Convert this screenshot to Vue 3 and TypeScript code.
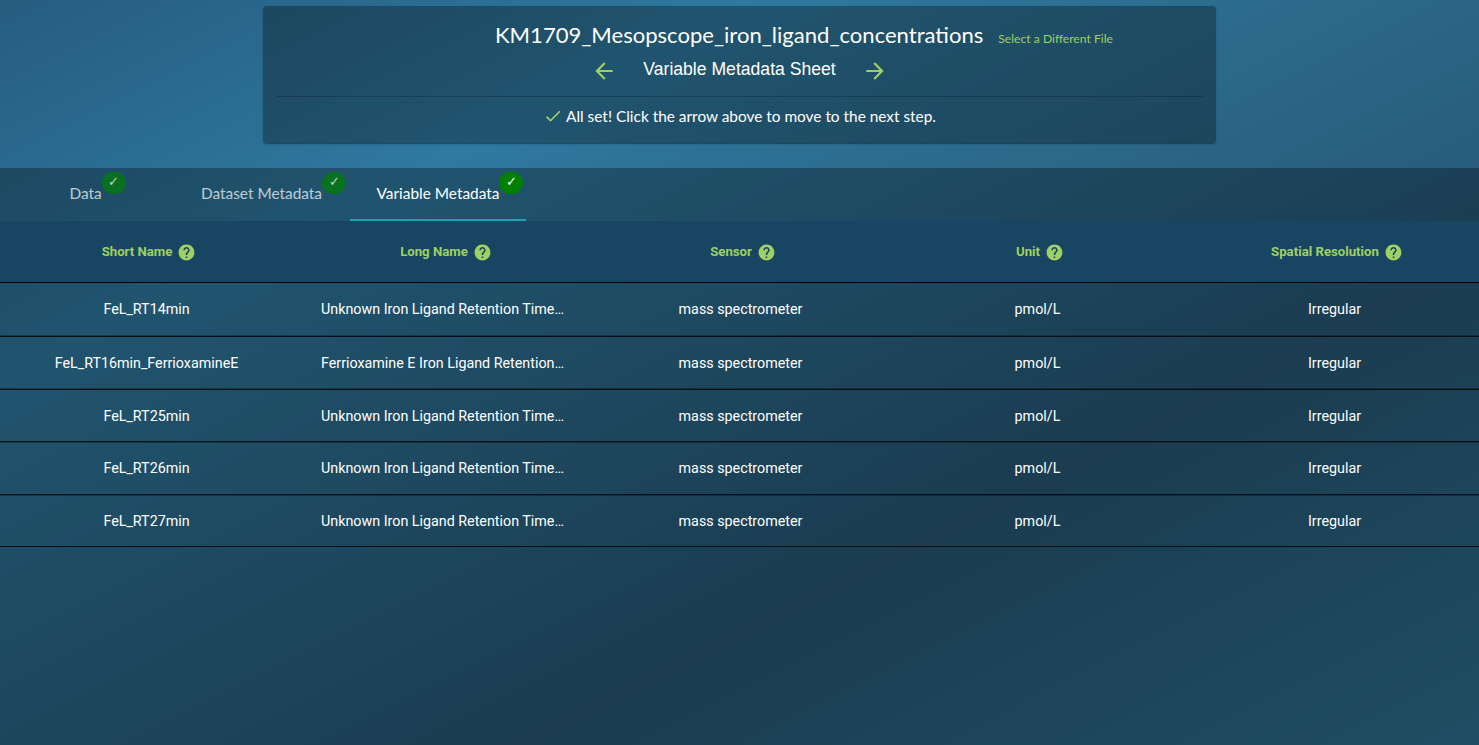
<script setup lang="ts">
interface Tab {
  label: string
  width: number
  active: boolean
}

interface Variable {
  shortName: string
  longName: string
  sensor: string
  unit: string
  resolution: string
}

const tabs: Tab[] = [
  { label: 'Data', width: 173, active: false },
  { label: 'Dataset Metadata', width: 177, active: false },
  { label: 'Variable Metadata', width: 176, active: true },
]

const columns: string[] = ['Short Name', 'Long Name', 'Sensor', 'Unit', 'Spatial Resolution']

const makeRow = (shortName: string, longName = 'Unknown Iron Ligand Retention Time…'): Variable => ({
  shortName,
  longName,
  sensor: 'mass spectrometer',
  unit: 'pmol/L',
  resolution: 'Irregular',
})

const rows: Variable[] = [
  makeRow('FeL_RT14min'),
  makeRow('FeL_RT16min_FerrioxamineE', 'Ferrioxamine E Iron Ligand Retention…'),
  makeRow('FeL_RT25min'),
  makeRow('FeL_RT26min'),
  makeRow('FeL_RT27min'),
]
</script>

<template>
  <div class="page">
    <header class="card">
      <div class="title-row">
        <h1 class="title">KM1709_Mesopscope_iron_ligand_concentrations</h1>
        <a class="select-file">Select a Different File</a>
      </div>
      <div class="step-row">
        <svg class="arrow" viewBox="0 0 24 24"><path d="M20 11H7.83l5.59-5.59L12 4l-8 8 8 8 1.41-1.41L7.83 13H20v-2z" /></svg>
        <span class="step-name">Variable Metadata Sheet</span>
        <svg class="arrow" viewBox="0 0 24 24"><path d="M12 4l-1.41 1.41L16.17 11H4v2h12.17l-5.58 5.59L12 20l8-8z" /></svg>
      </div>
      <hr class="divider" />
      <div class="status">
        <svg class="check" viewBox="0 0 24 24"><path d="M9 16.17L4.83 12l-1.42 1.41L9 19 21 7l-1.41-1.41z" /></svg>
        <span>All set! Click the arrow above to move to the next step.</span>
      </div>
    </header>

    <main class="workspace">
      <nav class="tabs">
        <button
          v-for="tab in tabs"
          :key="tab.label"
          class="tab"
          :class="{ active: tab.active }"
          :style="{ width: tab.width + 'px' }"
        >
          <span class="tab-content">
            <span class="tab-label">{{ tab.label }}<span class="badge">✓</span></span>
          </span>
        </button>
      </nav>
      <div class="grid">
        <div class="grid-head">
          <div v-for="column in columns" :key="column" class="head-cell">
            <span>{{ column }}</span>
            <svg class="help" viewBox="0 0 24 24"><path d="M12 2C6.48 2 2 6.48 2 12s4.48 10 10 10 10-4.48 10-10S17.52 2 12 2zm1 17h-2v-2h2v2zm2.07-7.75l-.9.92C13.45 12.9 13 13.5 13 15h-2v-.5c0-1.1.45-2.1 1.17-2.83l1.24-1.26c.37-.36.59-.86.59-1.41 0-1.1-.9-2-2-2s-2 .9-2 2H8c0-2.21 1.79-4 4-4s4 1.79 4 4c0 .88-.36 1.68-.93 2.25z" /></svg>
          </div>
        </div>
        <div v-for="row in rows" :key="row.shortName" class="grid-row">
          <div class="cell">{{ row.shortName }}</div>
          <div class="cell long-name">{{ row.longName }}</div>
          <div class="cell">{{ row.sensor }}</div>
          <div class="cell">{{ row.unit }}</div>
          <div class="cell">{{ row.resolution }}</div>
        </div>
      </div>
    </main>
  </div>
</template>

<style>
body {
  margin: 0;
  overflow: hidden;
}
</style>

<style scoped>
.page {
  box-sizing: border-box;
  height: 100vh;
  padding-top: 6px;
  display: flex;
  flex-direction: column;
  overflow: hidden;
  color: #fff;
  font-family: Lato, sans-serif;
  background: linear-gradient(to bottom right, #265c80 0%, #2f799f 25.5%, #275774 67.5%, #2e708f 100%);
}

.card {
  box-sizing: border-box;
  width: 953px;
  height: 136.5px;
  flex: none;
  margin: 0 auto 25.5px;
  padding: 12px;
  border-radius: 4px;
  background: rgba(0, 0, 0, 0.3);
  box-shadow: 0 2px 1px -1px rgba(0, 0, 0, 0.2), 0 1px 1px rgba(0, 0, 0, 0.14), 0 1px 3px rgba(0, 0, 0, 0.12);
}

.title-row {
  height: 34px;
  padding-left: 129px;
  display: flex;
  align-items: baseline;
  justify-content: center;
  gap: 15px;
}

.title {
  margin: 0;
  font-size: 22.05px;
  font-weight: 400;
  line-height: 34px;
}

.select-file {
  color: #9dd162;
  font-size: 12.15px;
}

.step-row {
  height: 34px;
  display: flex;
  align-items: center;
  justify-content: center;
  gap: 26px;
}

.step-name {
  font-family: "Liberation Sans", Arial, sans-serif;
  font-size: 17.6px;
  line-height: 20px;
  margin-top: -1px;
}

.arrow {
  width: 26px;
  height: 26px;
  margin-top: 3px;
  fill: #9dd162;
}

.divider {
  height: 1px;
  margin: 10px 1px 0;
  border: 0;
  background: rgba(0, 0, 0, 0.2);
}

.status {
  height: 38px;
  display: flex;
  align-items: center;
  justify-content: center;
  gap: 3px;
  font-size: 15.4px;
}

.check {
  width: 20px;
  height: 20px;
  fill: #9dd162;
}

.workspace {
  flex: 1;
  background: rgba(0, 0, 0, 0.3);
}

.tabs {
  height: 53px;
  display: flex;
}

.tab {
  box-sizing: border-box;
  height: 53px;
  padding: 0 0 1px;
  border: 0;
  border-bottom: 2px solid transparent;
  background: none;
  color: #fff;
  font: 15.4px/20px Lato, sans-serif;
}

.tab:first-child {
  padding-right: 2px;
}

.tab.active {
  border-color: #22a0b8;
}

.tab-content {
  opacity: 0.7;
}

.active .tab-content {
  opacity: 1;
}

.tab-label {
  position: relative;
}

.badge {
  position: absolute;
  left: 100%;
  top: -12px;
  width: 24px;
  height: 22px;
  border-radius: 11px;
  background: #008000;
  font-size: 12.5px;
  line-height: 20px;
  text-align: center;
}

.grid {
  font-family: Roboto, sans-serif;
  overflow: hidden;
}

.grid-head,
.grid-row {
  box-sizing: border-box;
  display: grid;
  grid-template-columns: repeat(5, 297px);
  margin: 0 -4px 0 -2px;
  border-bottom: 1px solid #000;
}

.grid-head {
  height: 62px;
  background: #184562;
}

.head-cell {
  display: flex;
  align-items: center;
  justify-content: center;
  gap: 5px;
  padding-left: 5px;
  color: #9dd162;
  font-size: 13.2px;
  font-weight: 700;
}

.help {
  width: 19px;
  height: 19px;
  margin-top: 2px;
  fill: #9dd162;
}

.grid-row {
  height: 53px;
  border-bottom-color: #060f15;
  box-shadow: 0 1px rgba(0, 0, 0, 0.3);
}

.grid-row:nth-child(2) {
  height: 54px;
  padding-bottom: 1px;
}

.grid-row:nth-child(4),
.grid-row:nth-child(6) {
  height: 52px;
}

.grid-row:nth-child(2),
.grid-row:nth-child(3) {
  box-shadow: inset 0 -1px rgba(0, 0, 0, 0.3);
}

.cell {
  display: flex;
  align-items: center;
  justify-content: center;
  font-size: 14.3px;
}

.long-name {
  padding-right: 2px;
}
</style>
